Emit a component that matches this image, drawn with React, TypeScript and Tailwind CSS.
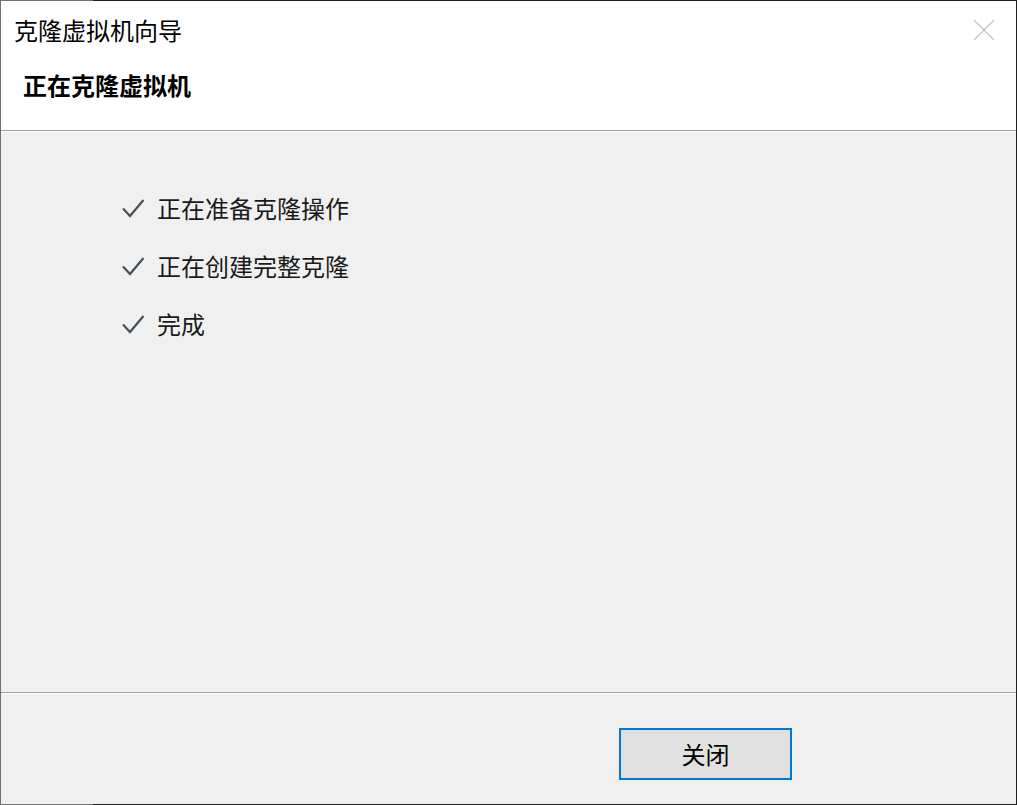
const font = '"Noto Sans CJK SC", "Noto Sans", sans-serif';

const steps = ['正在准备克隆操作', '正在创建完整克隆', '完成'];

function Tick() {
  return (
    <svg width="24" height="22" viewBox="0 0 24 22" fill="none" stroke="#46515c" strokeWidth="2.2">
      <path d="M2 11.5L9 19L22.5 3" />
    </svg>
  );
}

export default function App() {
  return (
    <div
      className="flex h-[805px] w-[1017px] flex-col bg-[#f0f0f0] text-[#1a1a1a]"
      style={{ fontFamily: font }}
    >
      {/* window top edge */}
      <div className="flex h-px w-full shrink-0">
        <div className="w-[93px] bg-[#707070]" />
        <div className="flex-1 bg-[#1f1f1f]" />
      </div>

      <div className="flex min-h-0 flex-1">
        <div className="w-px shrink-0 bg-[#707070]" />

        <div className="flex min-w-0 flex-1 flex-col">
          {/* header */}
          <div className="relative h-[129px] shrink-0 bg-white">
            <div className="pl-[13px] pt-[12px] text-[24px] leading-[34px] text-black">
              克隆虚拟机向导
            </div>
            <div className="pl-[22px] pt-[21px] text-[24px] font-bold leading-[34px] text-black">
              正在克隆虚拟机
            </div>
            <button className="absolute right-[20px] top-[17px] flex h-6 w-6 items-center justify-center text-[#c4c4c4]">
              <svg width="22" height="22" viewBox="0 0 22 22" fill="none" stroke="currentColor" strokeWidth="1.3">
                <path d="M1 1L21 21M21 1L1 21" />
              </svg>
            </button>
          </div>
          <div className="h-px shrink-0 bg-[#a0a0a0]" />
          <div className="ml-px h-px shrink-0 bg-white" />

          {/* body */}
          <div className="flex min-h-0 flex-1 flex-col gap-[24px] pl-[120px] pt-[59px]">
            {steps.map((s) => (
              <div key={s} className="flex h-[34px] items-center gap-[12px]">
                <Tick />
                <span className="text-[24px] leading-[34px] text-[#1a1a1a]">{s}</span>
              </div>
            ))}
          </div>

          <div className="h-px shrink-0 bg-[#a0a0a0]" />
          <div className="ml-px h-px shrink-0 bg-white" />

          {/* footer */}
          <div className="flex h-[110px] shrink-0 items-start pl-[618px] pt-[34px]">
            <button className="flex h-[52px] w-[173px] items-center justify-center border-2 border-[#0078d7] bg-[#e1e1e1] text-[24px] text-black">
              关闭
            </button>
          </div>
        </div>

        <div className="w-px shrink-0 bg-[#1f1f1f]" />
      </div>

      {/* window bottom edge */}
      <div className="flex h-px w-full shrink-0">
        <div className="w-[93px] bg-[#707070]" />
        <div className="flex-1 bg-[#1f1f1f]" />
      </div>
    </div>
  );
}
